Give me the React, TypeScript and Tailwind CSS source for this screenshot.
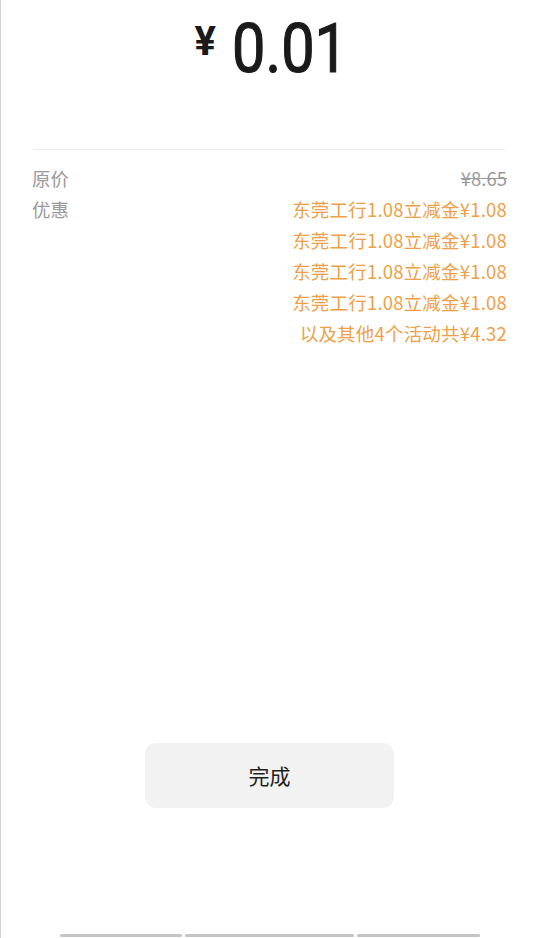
import React from 'react';

const discounts = [
  '东莞工行1.08立减金¥1.08',
  '东莞工行1.08立减金¥1.08',
  '东莞工行1.08立减金¥1.08',
  '东莞工行1.08立减金¥1.08',
  '以及其他4个活动共¥4.32',
];

const cjk = { fontFamily: '"Noto Sans CJK SC", "Noto Sans", sans-serif' };

export default function App() {
  return (
    <div className="flex h-[938px] flex-col border-l border-[#d2d2d2] bg-white" style={cjk}>
      {/* amount */}
      <div className="flex justify-center pt-[15px] pl-[4px]">
        <div className="flex items-start" style={{ fontFamily: 'Roboto, "Noto Sans", sans-serif' }}>
          <span className="mr-[16px] mt-[7px] text-[40px] font-bold leading-[40px] text-[#1a1a1a]">¥</span>
          <span className="-mr-[16px] origin-left scale-x-[0.875] text-[68px] font-normal leading-[68px] text-[#1a1a1a] [-webkit-text-stroke:1.2px_#1a1a1a]">
            0.01
          </span>
        </div>
      </div>

      <div className="mx-[32px] mt-[66px] border-t border-[#efefef]" />

      {/* details */}
      <div className="mx-[31px] mt-[13px] flex justify-between text-[18.5px] leading-[31px]">
        <div className="flex flex-col text-[#9a9a9a]">
          <span>原价</span>
          <span>优惠</span>
        </div>
        <div className="flex flex-col items-end">
          <span className="text-[#9a9a9a] line-through">¥8.65</span>
          {discounts.map((d, i) => (
            <span key={i} className="tracking-[0.2px] text-[#ef9f47]">{d}</span>
          ))}
        </div>
      </div>

      <div className="flex-1" />

      <button className="mx-auto flex h-[65px] w-[249px] items-center justify-center rounded-[11px] bg-[#f2f2f2] text-[21px] font-normal text-[#1f1f1f]">
        完成
      </button>

      {/* nav indicator */}
      <div className="mt-[126px] mb-[1px] flex justify-center gap-[3px] pl-[1px]">
        <div className="h-[3px] w-[122px] rounded-full bg-[#c4c4c4]" />
        <div className="h-[3px] w-[169px] rounded-full bg-[#c4c4c4]" />
        <div className="h-[3px] w-[123px] rounded-full bg-[#c4c4c4]" />
      </div>
    </div>
  );
}
